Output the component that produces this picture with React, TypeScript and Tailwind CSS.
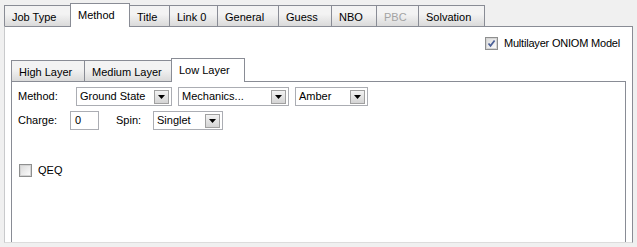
import React from "react";

const FONT = { fontFamily: '"Liberation Sans", Arial, sans-serif' };

function Tab({
  label,
  width,
  selected,
  disabled,
}: {
  label: string;
  width: number;
  selected?: boolean;
  disabled?: boolean;
}) {
  if (selected) {
    return (
      <div
        className="relative z-10 -mb-px -ml-px flex h-[24px] items-start border border-b-0 border-[#898c95] bg-white pl-[7px] pt-[3px]"
        style={{ width }}
      >
        {label}
      </div>
    );
  }
  return (
    <div
      className={`-ml-px flex h-[21px] items-start border border-b-0 border-[#898c95] bg-gradient-to-b from-[#f3f3f3] from-40% to-[#dadada] pl-[7px] pt-[3px] ${
        disabled ? "text-[#a3a3a3]" : "text-black"
      }`}
      style={{ width }}
    >
      {label}
    </div>
  );
}

function CheckBox({ checked }: { checked?: boolean }) {
  return (
    <div className="flex h-[13px] w-[13px] items-center justify-center border border-[#8e8f8f] bg-white">
      <div className="flex h-[11px] w-[11px] items-center justify-center border border-[#d4d4d4] bg-gradient-to-br from-[#dcdcdc] to-[#fbfbfb]">
        {checked && (
          <svg width="9" height="9" viewBox="0 0 9 9">
            <path d="M1.5 4.5 L3.5 6.8 L7.6 1.5" fill="none" stroke="#4a5f97" strokeWidth="1.7" />
          </svg>
        )}
      </div>
    </div>
  );
}

function Combo({ value, width }: { value: string; width: number }) {
  return (
    <div
      className="flex h-[19px] items-center justify-between border border-[#abadb3] bg-white pl-[3px] pr-[2px]"
      style={{ width }}
    >
      <span className="-mt-[1px]">{value}</span>
      <div className="flex h-[14px] w-[15px] items-center justify-center border border-[#a0a0a0] bg-gradient-to-b from-[#f2f2f2] to-[#d4d4d4]">
        <svg width="7" height="4" viewBox="0 0 7 4">
          <path d="M0 0 H7 L3.5 4 Z" fill="#000" />
        </svg>
      </div>
    </div>
  );
}

export default function App() {
  return (
    <div
      className="h-[247px] w-[637px] overflow-hidden bg-[#f0f0f0] pl-[4px] pt-[3px] text-[11px] text-black"
      style={FONT}
    >
      <div className="flex h-[23px] items-end pl-px">
        <Tab label="Job Type" width={67} />
        <Tab label="Method" width={60} selected />
        <Tab label="Title" width={41} />
        <Tab label="Link 0" width={49} />
        <Tab label="General" width={62} />
        <Tab label="Guess" width={54} />
        <Tab label="NBO" width={46} />
        <Tab label="PBC" width={43} disabled />
        <Tab label="Solvation" width={67} />
      </div>

      <div className="flex h-[217px] w-[629px] flex-col border border-[#898c95] border-l-[#c9cacc] border-b-[#dcdcdc] bg-white">
        <div className="mt-[10px] flex h-[13px] items-center justify-end gap-[6px] pr-[12px]">
          <CheckBox checked />
          <span className="tracking-[-0.2px]">Multilayer ONIOM Model</span>
        </div>

        <div className="ml-[6px] mt-[7px] flex h-[24px] items-end pl-px">
          <Tab label="High Layer" width={74} />
          <Tab label="Medium Layer" width={88} />
          <Tab label="Low Layer" width={74} selected />
        </div>

        <div className="mx-[6px] flex flex-1 flex-col border border-b-0 border-[#898c95] px-[6px] pt-[5px]">
          <div className="flex h-[19px] items-center">
            <span className="w-[58px]">Method:</span>
            <Combo value="Ground State" width={96} />
            <div className="w-[6px]" />
            <Combo value="Mechanics..." width={111} />
            <div className="w-[6px]" />
            <Combo value="Amber" width={73} />
          </div>

          <div className="mt-[5px] flex h-[19px] items-center">
            <span className="w-[52px]">Charge:</span>
            <div className="flex h-[19px] w-[29px] items-center border border-[#abadb3] bg-white pl-[4px]">0</div>
            <span className="ml-[17px] w-[37px]">Spin:</span>
            <Combo value="Singlet" width={70} />
          </div>

          <div className="mt-[34px] flex h-[13px] items-center gap-[6px] pl-px">
            <CheckBox />
            <span>QEQ</span>
          </div>
        </div>
      </div>
    </div>
  );
}
